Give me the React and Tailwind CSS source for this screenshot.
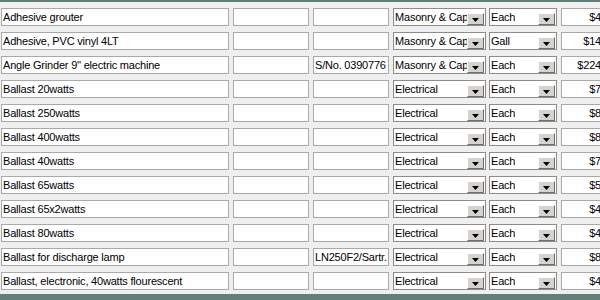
import React from "react";

const rows = [
  { name: "Adhesive grouter", serial: "", cat: "Masonry & Cap", unit: "Each", price: "$4" },
  { name: "Adhesive, PVC vinyl 4LT", serial: "", cat: "Masonry & Cap", unit: "Gall", price: "$14" },
  { name: "Angle Grinder 9'' electric machine", serial: "S/No. 0390776", cat: "Masonry & Cap", unit: "Each", price: "$224" },
  { name: "Ballast 20watts", serial: "", cat: "Electrical", unit: "Each", price: "$7" },
  { name: "Ballast 250watts", serial: "", cat: "Electrical", unit: "Each", price: "$8" },
  { name: "Ballast 400watts", serial: "", cat: "Electrical", unit: "Each", price: "$8" },
  { name: "Ballast 40watts", serial: "", cat: "Electrical", unit: "Each", price: "$7" },
  { name: "Ballast 65watts", serial: "", cat: "Electrical", unit: "Each", price: "$5" },
  { name: "Ballast 65x2watts", serial: "", cat: "Electrical", unit: "Each", price: "$4" },
  { name: "Ballast 80watts", serial: "", cat: "Electrical", unit: "Each", price: "$4" },
  { name: "Ballast for discharge lamp", serial: "LN250F2/Sartr.", cat: "Electrical", unit: "Each", price: "$8" },
  { name: "Ballast, electronic, 40watts flourescent", serial: "", cat: "Electrical", unit: "Each", price: "$4" },
];

// plain text box
const Box = ({ className, children, right }) => (
  <div
    className={`h-[18px] bg-white border border-[#a9a9a9] overflow-hidden whitespace-nowrap leading-[16px] px-[1px] shrink-0 ${
      right ? "text-right" : ""
    } ${className}`}
  >
    {children}
  </div>
);

// old-style combo with little drop button
const Combo = ({ className, value }) => (
  <div
    className={`h-[18px] bg-white border border-[#8c8c8c] flex items-center shrink-0 overflow-hidden ${className}`}
  >
    <span className="flex-1 overflow-hidden whitespace-nowrap leading-[16px] pl-[1px]">{value}</span>
    <div className="w-[17px] h-[12px] mr-[1px] mt-[3px] bg-[#d6d3ce] border-t border-l border-t-white border-l-white border-r border-b border-r-[#6e6e6e] border-b-[#6e6e6e] flex items-end justify-center pb-[2px] shrink-0">
      <svg width="7" height="4" viewBox="0 0 7 4">
        <path d="M0 0h7L3.5 4z" fill="#000" />
      </svg>
    </div>
  </div>
);

export default function App() {
  return (
    <div
      className="w-[600px] h-[300px] bg-[#efefef] overflow-hidden text-[11px] tracking-[-0.2px] text-black flex flex-col"
      style={{ fontFamily: '"Liberation Sans", Arial, sans-serif' }}
    >
      <div className="h-[2px] bg-[#5f7f78] shrink-0" />

      <div className="flex flex-col gap-[6px] pt-[6px]">
        {rows.map((r, i) => (
          <div key={i} className="flex h-[18px] pl-[1px]">
            <Box className="w-[228px]">{r.name}</Box>
            <Box className="w-[76px] ml-[4px]" />
            <Box className="w-[76px] ml-[4px]">{r.serial}</Box>
            <Combo className="w-[93px] ml-[4px]" value={r.cat} />
            <Combo className="w-[68px] ml-[3px]" value={r.unit} />
            <Box className="w-[42px] ml-[4px]" right>
              {r.price}
            </Box>
          </div>
        ))}
      </div>

      <div className="mt-[4px] h-[10px] bg-[#5f7f78] shrink-0" />
    </div>
  );
}
